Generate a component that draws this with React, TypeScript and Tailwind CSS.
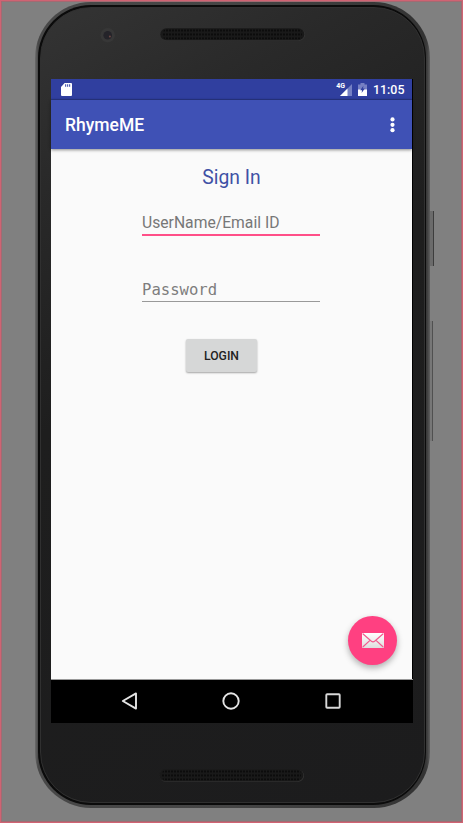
function Speaker({ id }: { id: string }) {
  return (
    <svg className="block h-[13px] w-[146px]" viewBox="0 0 146 13">
      <defs>
        <pattern id={id} x="3" y="1.5" width="3" height="4" patternUnits="userSpaceOnUse">
          <rect width="2" height="1.8" fill="#0b0b0b" />
        </pattern>
      </defs>
      <rect x="0.5" y="0.8" width="144.5" height="12" rx="6" fill="#363636" />
      <rect x="0.3" y="0.2" width="144" height="12" rx="6" fill="#191919" />
      <rect x="3" y="1" width="139" height="10.4" rx="4" fill={`url(#${id})`} />
    </svg>
  );
}

function StatusBar() {
  return (
    <div className="flex h-[21px] items-center bg-[#303f9f] pl-[10px] pr-[7px] shadow-[inset_0_-2px_1px_-1px_#27347f]">
      <svg className="h-[13px] w-[11px]" viewBox="0 0 11 13">
        <path d="M3.6 0H10a1 1 0 0 1 1 1v11a1 1 0 0 1-1 1H1a1 1 0 0 1-1-1V4z" fill="#fff" />
        <path d="M4 1.3h1.2v2.4H4zM6 1.3h1.2v2.4H6zM8 1.3h1.2v2.4H8z" fill="#5362b4" />
      </svg>
      <div className="ml-auto flex items-center">
        <div className="flex h-[14px] items-start">
          <span className="text-[7px] leading-[7px] font-bold text-white">4G</span>
          <svg className="-ml-[6px] h-[14px] w-[13px]" viewBox="0 0 13 14">
            <path d="M13 1v12H1z" fill="#7580c4" />
            <path d="M8.5 5.5V13H1z" fill="#fff" />
          </svg>
        </div>
        <svg className="ml-[6px] h-[13px] w-[9px]" viewBox="0 0 9 13">
          <path d="M2.5 0h4v1.5H9V7H0V1.5h2.5z" fill="#7680c3" />
          <path d="M0 6.5h9V13H0z" fill="#fff" />
          <path d="M5.4 2.8 2.2 7.2h1.9L3.6 10l3.2-4.4H5z" fill="#303f9f" />
        </svg>
        <span className="mt-px ml-[6px] w-[32px] text-[12.4px] leading-[20px] font-medium whitespace-nowrap text-white">11:05</span>
      </div>
    </div>
  );
}

function AppBar() {
  return (
    <header className="relative flex h-[49px] items-center justify-between bg-[#3f51b5] pl-[14px] pr-[17px] shadow-[0_1px_3px_rgba(0,0,0,0.45)]">
      <h1 className="mt-px text-[17.5px] leading-6 font-medium text-white">RhymeME</h1>
      <svg className="h-[16px] w-[5px]" viewBox="0 0 5 16" fill="#fff">
        <circle cx="2.5" cy="2.4" r="2.1" />
        <circle cx="2.5" cy="7.8" r="2.1" />
        <circle cx="2.5" cy="13.2" r="2.1" />
      </svg>
    </header>
  );
}

function SignIn() {
  return (
    <main className="flex flex-1 flex-col bg-[#fafafa]">
      <h2 className="mt-[16px] text-center text-[19.3px] leading-[26px] text-[#3f51a5]">Sign In</h2>
      <div className="mt-[22px] ml-[91px] h-[23px] w-[178px] border-b-2 border-[#ff4f88] text-[15.7px] leading-[20px] whitespace-nowrap text-[#777]">
        UserName/Email ID
      </div>
      <div className="mt-[43px] ml-[91px] h-[23px] w-[178px] border-b border-[#999] font-['DejaVu_Sans_Mono',monospace] text-[15.6px] leading-[23px] text-[#7d7d7d]">
        Password
      </div>
      <button className="mt-[37px] ml-[135px] h-[33px] w-[71px] rounded-[2px] bg-[#d6d7d7] text-[12.2px] leading-[34px] font-medium text-[#222] shadow-[0_1px_2px_rgba(0,0,0,0.35)]">
        LOGIN
      </button>
      <button className="mt-auto mr-[15px] mb-[15px] flex h-[49px] w-[49px] items-center justify-center self-end rounded-full bg-[#ff4081] shadow-[0_3px_6px_rgba(0,0,0,0.3)]">
        <svg className="h-[15px] w-[22px]" viewBox="0 0 22 15">
          <defs>
            <linearGradient id="mail" x2="0" y2="1">
              <stop stopColor="#fff" />
              <stop offset="1" stopColor="#dedede" />
            </linearGradient>
          </defs>
          <rect width="22" height="15" rx="1" fill="url(#mail)" />
          <path d="M.8.8 9.4 8.3q1.6 1.3 3.2 0L21.2.8M.8 14 8 7.4M21.2 14 14 7.4" fill="none" stroke="#f25a8e" strokeWidth="1.2" />
        </svg>
      </button>
    </main>
  );
}

function NavBar() {
  return (
    <nav className="flex h-[43px] items-center justify-between bg-black pb-[2px] pl-[70px] pr-[72px] shadow-[0_-1px_0_#999]">
      <svg className="h-[18px] w-[17px]" viewBox="0 0 17 18" fill="none" stroke="#e4e4e4" strokeWidth="1.9" strokeLinejoin="round">
        <path d="M15 1.4v15.2L1.8 9z" />
      </svg>
      <svg className="mr-[2px] h-[18px] w-[18px]" viewBox="0 0 18 18" fill="none" stroke="#e4e4e4" strokeWidth="1.9">
        <circle cx="9" cy="9" r="7.7" />
      </svg>
      <svg className="h-[16px] w-[16px]" viewBox="0 0 16 16" fill="none" stroke="#d8d8d8" strokeWidth="1.9">
        <rect x="1.3" y="1.3" width="13.4" height="13.4" rx="0.8" />
      </svg>
    </nav>
  );
}

export default function App() {
  return (
    <div className="flex h-[823px] w-[463px] overflow-hidden border border-[#d06373] bg-[#808080] pl-[34px] font-[Roboto,sans-serif] shadow-[inset_0_0_0_1px_#a36a72]">
      <div className="mt-px h-[806px] w-[395px] shrink-0 rounded-[56px] bg-[linear-gradient(90deg,#6c6c6c_0,#484848_3px,#454545_50%,#333_389px,#3c3c3c_392px,#5e5e5e_395px)] p-[3px] pr-[4px]">
        <div className="h-full rounded-[53px] bg-[#0b0b0b] p-[2px] pr-px">
          <div className="flex h-full flex-col rounded-[51px] border border-[#303030] bg-[linear-gradient(150deg,#343434_0,#292929_18%,#1e1e1e_42%,#1c1c1d_100%)] pl-[10px]">
            <div className="flex h-[71px] shrink-0 items-start pt-[20px]">
              <svg className="ml-[49px] h-[15px] w-[15px]" viewBox="0 0 15 15">
                <circle cx="7.7" cy="7.2" r="7.2" fill="#373737" />
                <circle cx="7.7" cy="7.2" r="4.3" fill="#242329" />
                <circle cx="9.9" cy="8.4" r="1" fill="#6b4844" />
              </svg>
              <div className="ml-[45px]"><Speaker id="grill-top" /></div>
            </div>
            <div className="flex h-[644px] w-[362px] flex-col bg-black">
              <div className="flex w-[361px] flex-1 flex-col">
                <StatusBar />
                <AppBar />
                <SignIn />
              </div>
              <NavBar />
            </div>
            <div className="mt-[46px] ml-[108px]"><Speaker id="grill-bottom" /></div>
          </div>
        </div>
      </div>
      <div className="flex flex-col">
        <div className="mt-[210px] h-[55px] w-[4px] border-r border-[#3d3d3d] bg-[#6b6b6b]" />
        <div className="mt-[55px] h-[120px] w-[3px] border-r border-[#505050] bg-[#777]" />
      </div>
    </div>
  );
}
